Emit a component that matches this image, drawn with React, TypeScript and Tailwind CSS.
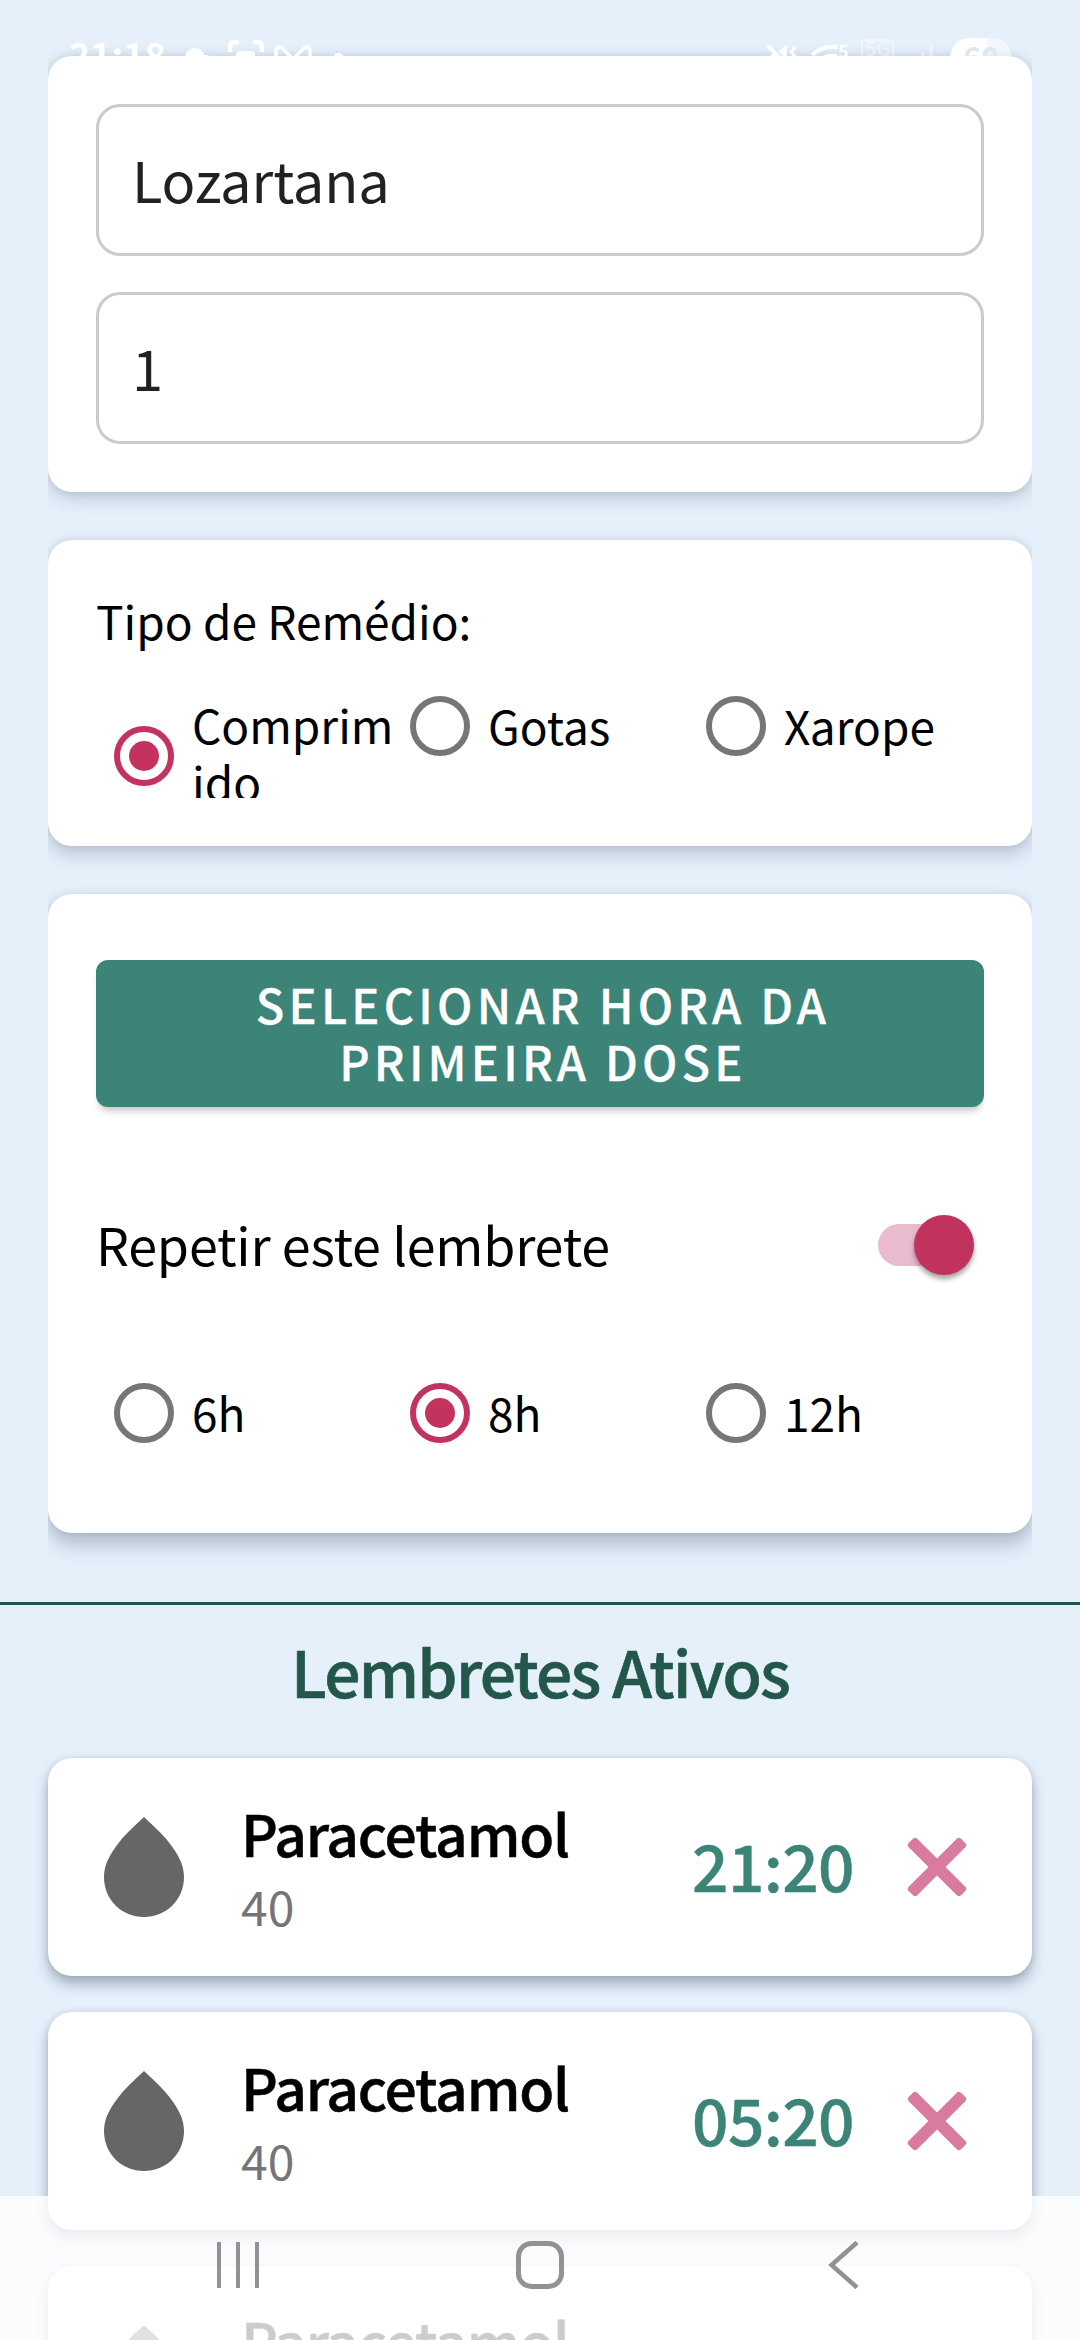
import type { ReactNode } from "react";

const reminders = [
  { id: 1, name: "Paracetamol", dose: "40", time: "21:20" },
  { id: 2, name: "Paracetamol", dose: "40", time: "05:20" },
  { id: 3, name: "Paracetamol", dose: "40", time: "13:20" },
];

function StatusBar() {
  return (
    <div className="absolute inset-x-0 top-0 z-10 flex h-14 items-start justify-between overflow-hidden pl-[69px] pr-[68px] text-white">
      <div className="flex items-start pt-[38px]">
        <span className="-mt-[5px] w-[95px] text-[36px] leading-[40px] font-bold">21:18</span>
        <svg className="ml-[20px] h-[40px] w-[130px] overflow-visible" viewBox="0 0 130 40" fill="none">
          <circle cx="11" cy="20" r="10" fill="white" />
          <path d="M14 26V17h11" fill="white" />
          <path d="M46 14V9q0-5 5-5h4M69 4h4q5 0 5 5v5" stroke="white" strokeWidth="4.5" />
          <rect x="52" y="13" width="19" height="20" rx="4" fill="white" />
          <path d="M92 36V13q0-4 3-4 2 0 4 2l10 10 10-10q2-2 4-2 3 0 3 4v23" stroke="white" strokeWidth="3.5" />
          <path d="M97 20l12 10 12-10" stroke="white" strokeWidth="2.5" />
        </svg>
        <span className="mt-[15px] ml-[19px] size-[11px] rounded-full bg-white" />
      </div>
      <div className="flex items-start pt-[38px]">
        <svg className="h-[40px] w-[172px] overflow-visible" viewBox="0 0 172 40" fill="none">
          <path d="M2 8l26 26" stroke="white" strokeWidth="4" />
          <path d="M12 13l9-6v16zM2 20q4-6 10-4v8H2z" fill="white" />
          <path d="M29 9l-4 5 4 4-4 5" stroke="white" strokeWidth="3" />
          <path d="M46 17q11-10 25-8" stroke="white" strokeWidth="4" />
          <path d="M53 22q7-5 18-4" stroke="white" strokeWidth="4" />
          <text x="72" y="20" fill="white" fontSize="18" fontWeight="700">5</text>
          <g opacity="0.4">
            <rect x="96" y="2" width="31" height="30" rx="3" stroke="white" strokeWidth="2" />
            <text x="99" y="18" fill="white" fontSize="20" fontWeight="500">5G</text>
            <path d="M157 14v16M165 7v24" stroke="white" strokeWidth="4" />
          </g>
        </svg>
        <div className="ml-[12px] flex h-[40px] w-[62px] items-center justify-center rounded-full bg-linear-to-r from-white from-60% to-white/50 to-60% pb-[4px] text-[30px] leading-[36px] font-bold text-[#dde8f2]">
          60
        </div>
      </div>
    </div>
  );
}

function Radio({ label, checked = false, wrap = false }: { label: string; checked?: boolean; wrap?: boolean }) {
  return (
    <div className="flex w-[296px] items-center">
      <span
        className={
          "mx-[18px] flex size-[60px] shrink-0 items-center justify-center rounded-full border-[6px] " +
          (checked ? "border-[#c4325e]" : "border-[#767676]") +
          (wrap ? " mt-[4px]" : "")
        }
      >
        {checked && <span className="size-[30px] rounded-full bg-[#c4325e]" />}
      </span>
      <span className="w-[206px] shrink-0 pb-[2px] text-[46px] leading-[57px] break-all text-black">{label}</span>
    </div>
  );
}

function Field({ value }: { value: string }) {
  return (
    <div className="flex h-[152px] items-center rounded-[24px] border-[3px] border-[#cbcbcb] pb-[3px] pl-[33px] text-[56px] leading-[72px] tracking-[-0.1px] text-[#212121]">
      {value}
    </div>
  );
}

function Card({ className, children }: { className: string; children: ReactNode }) {
  return <section className={"rounded-[24px] bg-white px-12 " + className}>{children}</section>;
}

function Drop() {
  return (
    <svg className="size-[120px] shrink-0" viewBox="0 0 24 24" fill="#666666">
      <path d="M12 2C10.700 3.250 8.500 5.150 7 7.100 5.200 9.400 4 11.500 4 14c0 4.600 3.600 8 8 8s8-3.400 8-8c0-2.500-1.200-4.600-3-6.900C15.500 5.150 13.300 3.250 12 2z" />
    </svg>
  );
}

function Cross() {
  return (
    <svg className="size-[60px] shrink-0" viewBox="-30 -30 60 60" fill="#d87b9f">
      <rect x="-37" y="-6" width="74" height="12" rx="3" transform="rotate(45)" />
      <rect x="-37" y="-6" width="74" height="12" rx="3" transform="rotate(-45)" />
    </svg>
  );
}

function NavBar() {
  return (
    <div className="absolute inset-x-0 bottom-0 z-10 h-[144px] bg-white/80">
      <svg className="h-full w-full" viewBox="0 0 1080 144" fill="none" stroke="#929292">
        <path d="M219 46v46M238 46v46M257 46v46" strokeWidth="4" />
        <rect x="518.500" y="47.500" width="43" height="43" rx="13" strokeWidth="5" />
        <path d="M857 46.500L831.500 69L857 91.500" strokeWidth="4.500" />
      </svg>
    </div>
  );
}

export default function App() {
  return (
    <div className="relative h-[2340px] w-[1080px] overflow-hidden bg-[#e5f0fb] font-['Noto_Sans_CJK_SC','Noto_Sans',sans-serif]">
      <StatusBar />

      <main className="mx-12 flex flex-col gap-12 overflow-x-clip pt-14">
        <Card className="flex h-[436px] flex-col gap-9 pt-12 shadow-[0_6px_18px_rgba(40,60,80,0.22),0_0_8px_rgba(40,60,80,0.12)]">
          <Field value="Lozartana" />
          <Field value="1" />
        </Card>

        <Card className="h-[306px] pt-[52px] shadow-[0_8px_18px_rgba(40,60,80,0.24),0_0_6px_rgba(40,60,80,0.1)]">
          <h2 className="text-[46px] leading-[56px] text-black">Tipo de Remédio:</h2>
          <div className="mt-12 flex h-[102px] items-start overflow-hidden">
            <Radio label="Comprimido" checked wrap />
            <Radio label="Gotas" />
            <Radio label="Xarope" />
          </div>
        </Card>

        <Card className="h-[639px] pt-[66px] shadow-[0_11px_20px_rgba(40,60,80,0.3),0_0_6px_rgba(40,60,80,0.1)]">
          <button className="flex h-[147px] w-full items-center justify-center rounded-[12px] bg-[#3b8477] pb-[3px] pl-[6px] text-[47px] leading-[57px] font-medium tracking-[4.2px] text-white shadow-[0_7px_7px_-3px_rgba(0,0,0,0.22)] [-webkit-text-stroke:0.3px]">
            <span>
              SELECIONAR HORA DA
              <br />
              PRIMEIRA DOSE
            </span>
          </button>
          <div className="mt-[102px] flex h-[72px] items-center justify-between pr-[10px]">
            <span className="pb-[3px] text-[52px] leading-[64px] tracking-[-0.2px] text-black">Repetir este lembrete</span>
            <span className="flex h-[42px] w-[96px] items-center justify-end rounded-full bg-linear-to-r from-[#eabace] from-60% to-transparent to-60%">
              <span className="size-[60px] rounded-full bg-[#c2325e] shadow-[0_4px_5px_rgba(0,0,0,0.35)]" />
            </span>
          </div>
          <div className="mt-[102px] flex">
            <Radio label="6h" />
            <Radio label="8h" checked />
            <Radio label="12h" />
          </div>
        </Card>
      </main>

      <div className="mt-[69px] h-[3px] bg-[#26554e]" />
      <h1 className="mt-[20px] mb-[43px] text-center text-[64px] leading-[90px] font-medium tracking-[-1.7px] text-[#23574c] [-webkit-text-stroke:0.7px]">
        Lembretes Ativos
      </h1>

      <ul className="mx-12 flex flex-col gap-9">
        {reminders.map((item) => (
          <li
            key={item.id}
            className="flex h-[218px] shrink-0 items-center rounded-[24px] bg-white pr-[65px] pl-9 shadow-[0_8px_14px_rgba(20,35,45,0.32),0_0_6px_rgba(40,60,80,0.1)]"
          >
            <Drop />
            <div className="ml-[37px] flex grow flex-col gap-[7px] pb-[3px]">
              <span className="text-[57px] leading-[72px] font-medium tracking-[-1.2px] text-black [-webkit-text-stroke:0.5px]">{item.name}</span>
              <span className="text-[48px] leading-[60px] text-[#757575]">{item.dose}</span>
            </div>
            <span className="pb-[6px] text-[64px] leading-[80px] font-medium tracking-[-0.6px] text-[#3b8477] [-webkit-text-stroke:0.5px]">{item.time}</span>
            <span className="ml-[53px]">
              <Cross />
            </span>
          </li>
        ))}
      </ul>

      <NavBar />
    </div>
  );
}
